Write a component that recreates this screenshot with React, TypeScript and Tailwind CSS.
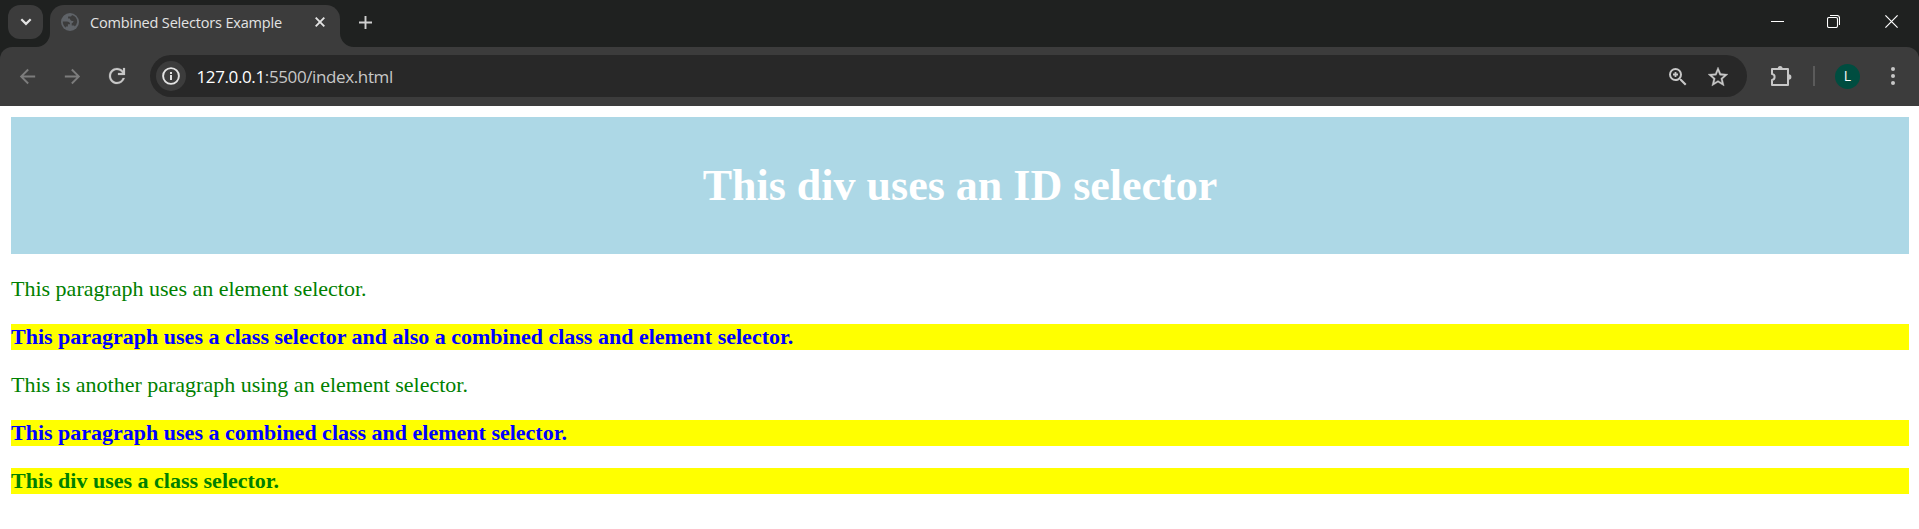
import React from "react";

function TabStrip() {
  return (
    <div className="flex h-[47px] items-start bg-[#1f2120]">
      <button className="mt-[5px] ml-2 flex h-[34px] w-[35px] items-center justify-center rounded-xl bg-[#3c3c3c]">
        <svg width="12" height="8" viewBox="0 0 12 8" fill="none" stroke="#e3e3e3" strokeWidth="2.2">
          <path d="M1.3 1.2 6 5.9l4.7-4.7" />
        </svg>
      </button>
      <div className="relative mt-[5px] ml-[7px] flex h-[42px] w-[290px] items-start rounded-t-[14px] bg-[#3c3c3c] pl-[11px]">
        <svg className="absolute bottom-0 -left-[14px]" width="14" height="14" viewBox="0 0 14 14">
          <path d="M14 0v14H0A14 14 0 0 0 14 0z" fill="#3c3c3c" />
        </svg>
        <svg className="absolute -right-[14px] bottom-0" width="14" height="14" viewBox="0 0 14 14">
          <path d="M0 0v14h14A14 14 0 0 1 0 0z" fill="#3c3c3c" />
        </svg>
        <svg className="mt-2" width="18" height="18" viewBox="0 0 18 18">
          <circle cx="9" cy="9" r="9" fill="#5f6368" />
          <path d="M1.8 8.6h4.1c2 0 3.1 1 3.2 2.7H6.9v2.3H4.9v1.2A7.2 7.2 0 0 1 1.8 8.6z" fill="#3c3c3c" />
          <path d="M10.9 2.1c-.2 1-.9 1.5-1.9 1.5H7.1v2h1.8c.3 1.5 1 2.3 2.3 2.3h1.3c0 1.3-.9 2-1.8 2.3v2.2h1.8c.8 0 1.1.5 1.1 1.1A7.2 7.2 0 0 0 16.2 9 7.2 7.2 0 0 0 10.9 2.1z" fill="#3c3c3c" />
        </svg>
        <span className="mt-2 ml-[11px] w-[195px] whitespace-nowrap font-['Open_Sans',sans-serif] text-[14.5px] leading-5 tracking-[-0.18px] text-[#e3e3e3]">
          Combined Selectors Example
        </span>
        <svg className="mt-3 ml-[30px]" width="10" height="10" viewBox="0 0 10 10" stroke="#e3e3e3" strokeWidth="1.9">
          <path d="M.7.7l8.6 8.6M9.3.7.7 9.3" />
        </svg>
      </div>
      <svg className="mt-[15.5px] ml-[19px]" width="13" height="13" viewBox="0 0 13 13" stroke="#d0d0d0" strokeWidth="1.9">
        <path d="M6.5 0v13M0 6.5h13" />
      </svg>
      <div className="mt-[15px] mr-[21px] ml-auto flex items-start gap-[43px]">
        <svg width="13" height="13" viewBox="0 0 13 13">
          <path d="M0 6h13v1H0z" fill="#fff" />
        </svg>
        <svg width="13" height="13" viewBox="0 0 13 13" fill="none" stroke="#fff">
          <path d="M3 .5h7a2.5 2.5 0 0 1 2.5 2.5v7" strokeWidth="1.1" />
          <rect x=".5" y="2.5" width="10" height="10" rx="1.5" strokeWidth="1.1" />
        </svg>
        <svg className="ml-[2px]" width="13" height="13" viewBox="0 0 13 13" stroke="#fff" strokeWidth="1.2">
          <path d="M.4.4l12.2 12.2M12.6.4.4 12.6" />
        </svg>
      </div>
    </div>
  );
}

function Toolbar() {
  return (
    <div className="bg-[#1f2120]">
      <div className="flex h-[59px] items-center rounded-t-[12px] bg-[#3c3c3c] pb-[1px]">
        <svg className="ml-4" width="23" height="23" viewBox="0 0 24 24" fill="#7c7c7c">
          <path d="M20 11H7.830l5.590-5.590L12 4l-8 8 8 8 1.410-1.410L7.830 13H20z" />
        </svg>
        <svg className="ml-[22px]" width="23" height="23" viewBox="0 0 24 24" fill="#7c7c7c">
          <path d="M4 13h12.170l-5.590 5.590L12 20l8-8-8-8-1.410 1.410L16.170 11H4z" />
        </svg>
        <svg className="ml-[21px]" width="24" height="24" viewBox="0 0 24 24" fill="#c7c7c7" stroke="#c7c7c7" strokeWidth=".2">
          <path d="M12 20c-2.230 0-4.130-.78-5.680-2.330C4.770 16.130 4 14.230 4 12s.77-4.130 2.330-5.680C7.880 4.770 9.770 4 12 4c1.150 0 2.250.24 3.300.71 1.050.48 1.950 1.160 2.700 2.040V4h2v7h-7V9h4.200a5.900 5.900 0 0 0-2.190-2.200A5.900 5.900 0 0 0 12 6c-1.670 0-3.080.58-4.250 1.750S6 10.330 6 12s.58 3.080 1.750 4.250S10.330 18 12 18c1.280 0 2.440-.37 3.470-1.100A5.900 5.900 0 0 0 17.650 14h2.100a7.800 7.800 0 0 1-2.850 4.330A7.800 7.800 0 0 1 12 20z" />
        </svg>
        <div className="ml-[21px] flex h-[42px] w-[1597px] items-center rounded-full bg-[#282828] pl-1.5">
          <div className="flex size-[30px] items-center justify-center rounded-full bg-[#3c3c3c]">
            <svg width="18" height="18" viewBox="0 0 18 18" fill="#e3e3e3">
              <circle cx="9" cy="9" r="7.9" fill="none" stroke="#e3e3e3" strokeWidth="1.9" />
              <path d="M8 8h2v5H8zM8 5h2v1.900H8z" />
            </svg>
          </div>
          <span className="mt-[2px] ml-[10.5px] whitespace-nowrap font-['Open_Sans',sans-serif] text-[17px] leading-6 tracking-[-0.38px] text-[#c7c7c7]">
            <span className="text-white">127.0.0.1</span>:5500/index.html
          </span>
          <svg className="mt-[1px] ml-auto" width="24" height="24" viewBox="0 0 24 24" fill="#c7c7c7">
            <path d="M15.500 14h-.79l-.28-.27A6.470 6.470 0 0 0 16 9.500 6.500 6.500 0 1 0 9.500 16c1.610 0 3.090-.59 4.230-1.570l.27.28v.79l5 4.990L20.490 19l-4.990-5zm-6 0C7.010 14 5 11.990 5 9.500S7.010 5 9.500 5 14 7.010 14 9.500 11.990 14 9.500 14zm.900-7H8.600v1.600H7v1.800h1.600V12h1.800v-1.600H12V8.600h-1.600z" />
          </svg>
          <svg className="mt-[1px] mr-[17.5px] ml-4" width="24" height="24" viewBox="0 0 24 24" fill="#c7c7c7" stroke="#c7c7c7" strokeWidth=".3">
            <path d="M22 9.240l-7.190-.62L12 2 9.190 8.630 2 9.240l5.460 4.730L5.820 21 12 17.270 18.180 21l-1.640-7.030L22 9.240zM12 15.400l-3.760 2.270 1-4.280-3.320-2.880 4.380-.38L12 6.100l1.710 4.040 4.380.38-3.320 2.880 1 4.280L12 15.400z" />
          </svg>
        </div>
        <svg className="ml-6" width="21" height="21" viewBox="0 0 21 21">
          <path d="M1 3h16v16H1v-5.100c1.600-.2 2.600-1.300 2.600-2.900S2.600 8.300 1 8.100z" fill="none" stroke="#c7c7c7" strokeWidth="2" strokeLinejoin="round" />
          <path d="M6.600 2.500a2.500 2.500 0 0 1 5 0zM17.700 8.300a2.700 2.700 0 0 1 0 5.400z" fill="#c7c7c7" />
        </svg>
        <span className="ml-[21px] h-5 w-0.5 bg-[#5b5b5b]" />
        <span className="ml-5 flex size-[25px] items-center justify-center rounded-full bg-[#004d40] font-['Open_Sans',sans-serif] text-[14px] leading-none text-white">
          L
        </span>
        <svg className="ml-[30.5px]" width="4" height="18" viewBox="0 0 4 18" fill="#c7c7c7">
          <circle cx="2" cy="2" r="2" />
          <circle cx="2" cy="9" r="2" />
          <circle cx="2" cy="16" r="2" />
        </svg>
      </div>
    </div>
  );
}

export default function App() {
  return (
    <div className="h-[529px] w-full overflow-hidden bg-white">
      <TabStrip />
      <Toolbar />
      <main className="flex flex-col gap-[22px] py-[11px] pr-[10px] pl-[11px] font-['Liberation_Serif',serif] text-[22px] leading-[26px] text-[green]">
        <div className="flex h-[137px] items-center justify-center bg-[#add8e6]">
          <h1 className="text-[44px] leading-[51px] font-bold text-white">This div uses an ID selector</h1>
        </div>
        <p>This paragraph uses an element selector.</p>
        <p className="bg-[yellow] font-bold text-[blue]">
          This paragraph uses a class selector and also a combined class and element selector.
        </p>
        <p>This is another paragraph using an element selector.</p>
        <p className="bg-[yellow] font-bold text-[blue]">This paragraph uses a combined class and element selector.</p>
        <div className="bg-[yellow] font-bold">This div uses a class selector.</div>
      </main>
    </div>
  );
}
